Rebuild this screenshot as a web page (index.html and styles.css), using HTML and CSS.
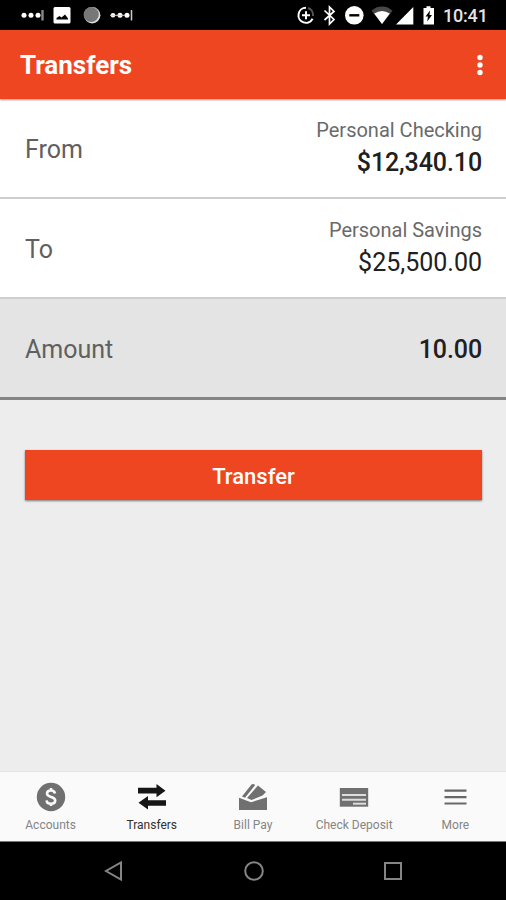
FILE: index.html
```html
<!DOCTYPE html>
<html lang="en">
<head>
<meta charset="utf-8">
<title>Transfers</title>
<link rel="stylesheet" href="styles.css">
</head>
<body>
<div class="screen">
  <div class="status">
    <svg class="status-icons" width="120" height="30" viewBox="20 0 120 30">
      <g fill="#fff"><circle cx="24" cy="15.300" r="2.500"/><circle cx="31" cy="15.300" r="2.500"/><circle cx="38" cy="15.300" r="2.500"/></g>
      <path d="M42.500 10v10.500" stroke="#888" stroke-width="2.400"/>
      <rect x="53.500" y="7" width="17" height="16.500" rx="1.500" fill="#fff"/>
      <path d="M56.500 19.500v-1.500l3-2 2 1.500 3.500-3 3 4v1z" fill="#000"/>
      <circle cx="92.200" cy="15.300" r="8.200" fill="#ddd"/><circle cx="91.200" cy="14.500" r="7.600" fill="#777"/>
      <g fill="#fff"><circle cx="113" cy="15.300" r="2.300"/><circle cx="120" cy="15.300" r="2.500"/><circle cx="127" cy="15.300" r="2.500"/></g>
      <path d="M110 15.300h15" stroke="#ccc" stroke-width="1"/>
      <path d="M131.500 10v10.500" stroke="#ccc" stroke-width="1.500"/>
    </svg>
    <div class="status-right">
      <svg width="146" height="30" viewBox="294 0 146 30" fill="#fff">
        <path d="M306 7.800a7.500 7.500 0 1 0 6.600 11" fill="none" stroke="#fff" stroke-width="2"/>
        <path d="M308 8a7.500 7.500 0 0 1 5 8" fill="none" stroke="#555" stroke-width="2"/>
        <path d="M306 11.300v8M302 15.300h8" stroke="#fff" stroke-width="2"/>
        <path d="M324.500 10.500l9.500 9-4.500 4.500V7l4.500 4.500-9.500 8.500" fill="none" stroke="#fff" stroke-width="1.700"/>
        <circle cx="354.300" cy="15.300" r="9.300"/><path d="M349.300 15.300h10" stroke="#000" stroke-width="2.400"/>
        <path d="M371.500 10.800a15 15 0 0 1 21 0L382 24z" fill="#484848"/><path d="M374.200 13.500q7.800-5 15.600 0L382 24z"/>
        <path d="M413.300 7v17.500H396z"/>
        <path d="M423.500 8h3V6.200h4V8h3.500v16.500h-10.500z"/><path d="M430 10.500l-4.500 6h2.500l-.8 5 4.800-6.500h-2.500z" fill="#000"/>
      </svg>
      <span class="clock">10:41</span>
    </div>
  </div>
  <header class="appbar">
    <h1>Transfers</h1>
    <svg width="8" height="24" viewBox="0 0 8 24" fill="#fff"><circle cx="4" cy="4.500" r="2.700"/><circle cx="4" cy="12" r="2.700"/><circle cx="4" cy="19.500" r="2.700"/></svg>
  </header>
  <main>
    <section class="row"><span class="label">From</span><div class="account"><span class="name">Personal Checking</span><span class="value strong">$12,340.10</span></div></section>
    <section class="row"><span class="label">To</span><div class="account"><span class="name">Personal Savings</span><span class="value">$25,500.00</span></div></section>
    <section class="row amount"><span class="label">Amount</span><span class="value strong">10.00</span></section>
    <button class="submit">Transfer</button>
  </main>
  <nav class="tabs">
    <div class="tab">
      <svg width="30" height="30" viewBox="0 0 30 30"><circle cx="15" cy="15" r="14.200" fill="#707070"/><path d="M19 11.500c-.4-2-1.800-3-4-3-2.500 0-4 1.200-4 3 0 4.500 8.200 2.500 8.200 7 0 2-1.700 3.200-4.200 3.200s-4.200-1.200-4.400-3.400M15 6v3M15 21v3" fill="none" stroke="#fafafa" stroke-width="2.600"/></svg>
      <span>Accounts</span>
    </div>
    <div class="tab active">
      <svg width="30" height="30" viewBox="0 0 30 30" fill="#161616"><path d="M1 5.700h18.500V2l9 6.700-9 6.500v-3.700H1zM29 18.200H11V14L1.500 20.800 11 27.500v-3.700h18z"/></svg>
      <span>Transfers</span>
    </div>
    <div class="tab">
      <svg width="30" height="30" viewBox="0 0 30 30" fill="#707070"><path d="M1 15.800l12 4.500 16-5V28H1z"/><path d="M4 14.500L13.500 2.500q1-1 2.500-.3l1.200.7L7 15.700zM9 16L20 3.500l8 6.500-3.500 3.500L13.500 18z"/></svg>
      <span>Bill Pay</span>
    </div>
    <div class="tab">
      <svg width="30" height="30" viewBox="0 0 30 30"><path d="M.8 6h28.400v18.700H.8z" fill="#707070"/><path d="M3 13h24M3 17.800h24" stroke="#ddd" stroke-width="2"/><path d="M14 21.700h13" stroke="#ddd" stroke-width="2"/></svg>
      <span>Check Deposit</span>
    </div>
    <div class="tab">
      <svg width="30" height="30" viewBox="0 0 30 30"><path d="M4.500 8.700h22M4.500 15.200h22M4.500 21.500h22" stroke="#686868" stroke-width="2.200"/></svg>
      <span>More</span>
    </div>
  </nav>
  <div class="system">
    <svg width="20" height="22" viewBox="0 0 20 22"><path d="M17 2.500v17L2 11z"/></svg>
    <svg width="22" height="22" viewBox="0 0 22 22"><circle cx="11" cy="11" r="8.800"/></svg>
    <svg width="20" height="22" viewBox="0 0 20 22"><path d="M2 3h16v16H2z"/></svg>
  </div>
</div>
</body>
</html>
```
FILE: styles.css
```css
* { box-sizing: border-box; }
body { margin: 0; font-family: Roboto, sans-serif; }
.screen { width: 506px; height: 900px; display: flex; flex-direction: column; background: #ededed; overflow: hidden; }
.status { height: 30px; flex: none; background: #000; display: flex; justify-content: space-between; padding: 0 18px 0 20px; }
.status svg { display: block; }
.status-right { display: flex; align-items: center; gap: 3px; }
.clock { color: #e4e4e4; font-size: 18px; font-weight: 500; line-height: 30px; width: 45px; white-space: nowrap; padding-top: 2px; letter-spacing: -0.2px; }
.appbar { height: 69px; flex: none; background: #ef4622; display: flex; align-items: center; justify-content: space-between; padding: 0 22px 0 20px; box-shadow: 0 1px 2px #999; position: relative; }
.appbar h1 { margin: 1px 0 0; color: #fff; font-size: 26px; line-height: 30px; font-weight: 700; }
main { flex: 1; display: flex; flex-direction: column; }
.row { height: 100px; flex: none; background: #fff; border-bottom: 2px solid #cecece; display: flex; align-items: center; justify-content: space-between; padding: 3px 24px 0 25px; }
.label { color: #606060; font-size: 25px; line-height: 30px; }
.account { display: flex; flex-direction: column; align-items: flex-end; padding-bottom: 1px; }
.name { color: #6a6a6a; font-size: 20px; line-height: 24px; padding-bottom: 4px; }
.value { color: #202020; font-size: 25px; line-height: 34px; }
.strong { font-weight: 500; letter-spacing: -0.1px; }
.amount { background: #e4e4e4; border-bottom: 3px solid #858585; height: 101px; }
.submit { height: 50px; margin: 50px 24px 0 25px; border: 0; background: #ef4622; color: #fff; font: 500 22px/50px Roboto, sans-serif; box-shadow: 0 1px 2px #777; padding: 2px 0 0; }
.tabs { height: 71px; flex: none; display: grid; grid-template-columns: repeat(5, 1fr); background: #fafafa; border-top: 1px solid #e3e3e3; border-bottom: 1px solid #777; }
.tab { display: flex; flex-direction: column; align-items: center; padding-top: 10px; color: #858585; font-size: 12px; line-height: 16px; gap: 5px; white-space: nowrap; }
.tab svg { display: block; }
.active { color: #303030; }
.system { height: 58px; flex: none; background: #000; display: flex; justify-content: space-between; align-items: center; padding: 0 103px 0 104px; }
.system svg { fill: none; stroke: #858585; stroke-width: 2; }
```
